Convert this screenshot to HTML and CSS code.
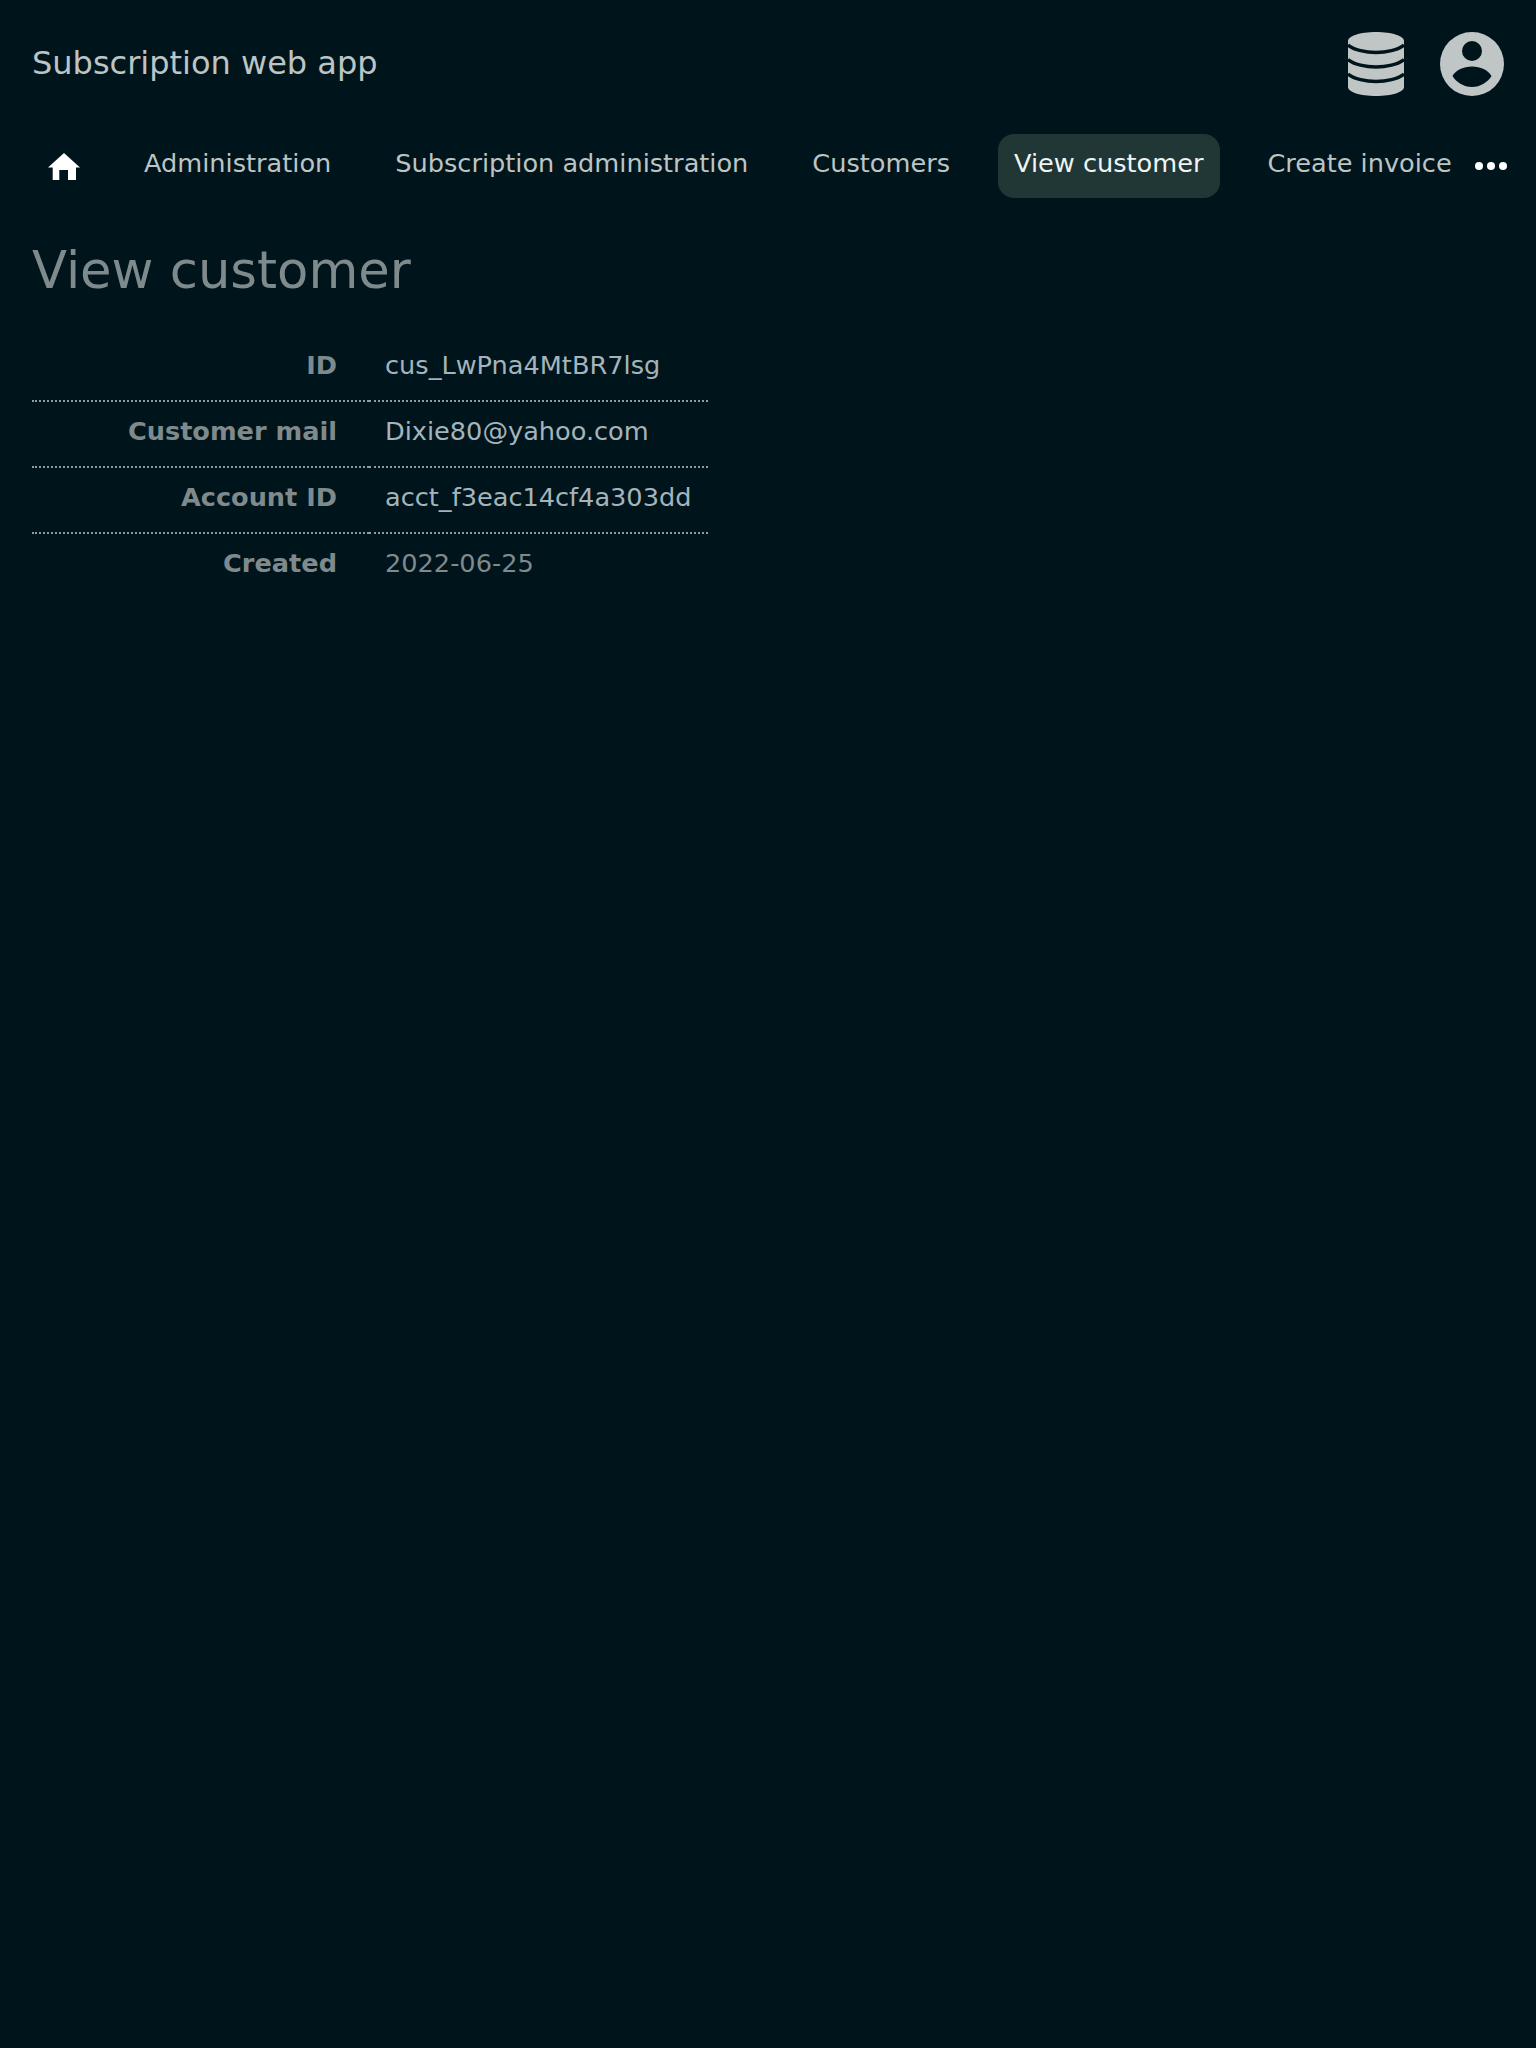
FILE: index.html
```html
<!DOCTYPE html>
<html lang="en">
<head>
  <meta charset="UTF-8">
  <title>View customer</title>
  <link rel="stylesheet" href="styles.css">
</head>
<body>
  <header class="topbar">
    <div class="app-title">Subscription web app</div>
    <div class="top-icons">
      <svg class="icon-db" viewBox="0 0 56 64" width="56" height="64">
        <path d="M0 9C0 4 12 0 28 0s28 4 28 9v46c0 5-12 9-28 9S0 60 0 55z"/>
        <path class="cut" d="M0 13c6 5 18 7.500 28 7.500S50 18 56 13"/>
        <path class="cut" d="M0 27.500c6 5 18 7.500 28 7.500s22-2.500 28-7.500"/>
        <path class="cut" d="M0 42c6 5 18 7.500 28 7.500S50 47 56 42"/>
      </svg>
      <svg class="icon-user" viewBox="0 0 64 64" width="64" height="64">
        <path fill-rule="evenodd" d="M32 0a32 32 0 1 1 0 64a32 32 0 1 1 0-64zM32 9a10 10 0 1 0 0 20a10 10 0 1 0 0-20zM32 34.500c-8.500 0-16 3.500-19.500 9.500c3.500 6 11 11 19.500 11s16-5 19.500-11c-3.500-6-11-9.500-19.500-9.500z"/>
      </svg>
    </div>
  </header>

  <nav class="menu">
    <a class="menu-item home" href="#">
      <svg viewBox="0 0 32 32" width="32" height="32"><path d="M16 3L0 17.500h4.700V30h6.600V20h8.700v10h8V17.500H32z"/></svg>
    </a>
    <a class="menu-item" href="#">Administration</a>
    <a class="menu-item" href="#">Subscription administration</a>
    <a class="menu-item" href="#">Customers</a>
    <a class="menu-item active" href="#">View customer</a>
    <a class="menu-item" href="#">Create invoice</a>
    <svg class="more" viewBox="0 0 32 8" width="32" height="8"><circle cx="4" cy="4" r="4"/><circle cx="16" cy="4" r="4"/><circle cx="28" cy="4" r="4"/></svg>
  </nav>

  <main class="content">
    <h1>View customer</h1>
    <table class="details">
      <tr><th>ID</th><td>cus_LwPna4MtBR7lsg</td></tr>
      <tr><th>Customer mail</th><td>Dixie80@yahoo.com</td></tr>
      <tr><th>Account ID</th><td>acct_f3eac14cf4a303dd</td></tr>
      <tr><th>Created</th><td class="dim">2022-06-25</td></tr>
    </table>
  </main>
</body>
</html>
```

FILE: styles.css
```css
* {
  box-sizing: border-box;
}
html, body {
  height: 100%;
}
body {
  margin: 0;
  background: #00141b;
  color: #bcc4c4;
  font-family: "DejaVu Sans", sans-serif;
  font-size: 25.6px;
}
.topbar {
  display: flex;
  justify-content: space-between;
  align-items: center;
  padding: 32px 32px 0;
  height: 96px;
}
.app-title {
  font-size: 32px;
  margin-bottom: 3px;
}
.top-icons {
  display: flex;
  gap: 36px;
  align-items: center;
}
.top-icons svg {
  fill: #c0c6c6;
  display: block;
}
.top-icons .cut {
  fill: none;
  stroke: #00141b;
  stroke-width: 3.5;
}
.menu {
  display: flex;
  align-items: center;
  gap: 32px;
  margin-top: 38px;
  padding-left: 32px;
  height: 64px;
}
.menu-item {
  display: flex;
  align-items: center;
  height: 64px;
  padding: 0 16px 7px;
  color: #bcc4c4;
  text-decoration: none;
  border-radius: 16px;
  white-space: nowrap;
}
.menu-item.home {
  padding-bottom: 0;
}
.menu-item.home svg {
  fill: #fff;
  display: block;
}
.menu-item.active {
  background: #203735;
  color: #f0f4f4;
  padding-right: 17px;
  margin-right: -1px;
}
.more {
  flex-shrink: 0;
  margin-left: -25px;
  fill: #fff;
}
.content {
  padding: 0 32px;
}
h1 {
  margin: 40px 0 33px;
  font-size: 51.2px;
  font-weight: 400;
  line-height: 64px;
  color: #7f8a8c;
}
.details {
  border-collapse: collapse;
}
.details th,
.details td {
  height: 66px;
  padding: 0 17px 6px 16px;
  border-bottom: 2px dotted #8f9da3;
  white-space: nowrap;
}
.details tr:last-child th,
.details tr:last-child td {
  border-bottom: 0;
  padding-bottom: 8px;
}
.details th {
  width: 337px;
  padding-right: 32px;
  text-align: right;
  color: #7f8a8c;
}
.details td {
  color: #a5b4bc;
}
.details td.dim {
  color: #7f8a8c;
}
```
